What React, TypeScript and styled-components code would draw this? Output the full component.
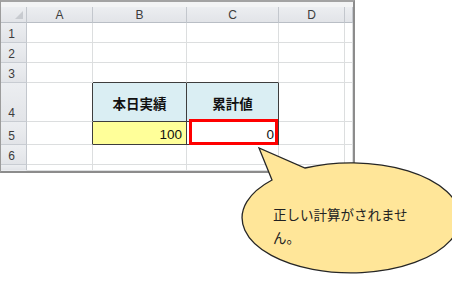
import React from "react";
import styled, { createGlobalStyle, css } from "styled-components";

const Global = createGlobalStyle`
  html, body { margin: 0; padding: 0; background: #ffffff; }
  body { width: 452px; height: 283px; overflow: hidden; position: relative;
    font-family: "Liberation Sans", "Noto Sans CJK JP", sans-serif; }
`;

const Page = styled.div`
  position: relative;
  width: 452px;
  height: 283px;
`;

const Frame = styled.div`
  width: 352px;
  border-top: 2px solid #a3a3a3;
  border-left: 1px solid #9c9c9c;
  border-right: 2px solid #8c8c8c;
  border-bottom: 2px solid #8c8c8c;
  background: #ffffff;
`;

const TopStrip = styled.div`
  height: 5px;
  background: #f3f4f5;
`;

const Sheet = styled.div`
  display: grid;
  grid-template-columns: 26px 66px 94px 92px 66px 8px;
  grid-template-rows: 16px 20px 20px 20px 39px 23px 20px 6px;
`;

const headerBase = css`
  box-sizing: border-box;
  background: linear-gradient(#eceef1, #e2e4e8);
  border-right: 1px solid #c3c7cd;
  border-bottom: 1px solid #b9bec5;
  color: #3c3c3c;
  font-size: 12px;
  display: flex;
`;

const Corner = styled.div`
  ${headerBase};
  position: relative;
`;

const CornerMark = styled.div`
  position: absolute;
  right: 3px;
  bottom: 3px;
  width: 0;
  height: 0;
  border-left: 8px solid transparent;
  border-bottom: 8px solid #c8cbd0;
`;

const ColHeader = styled.div`
  ${headerBase};
  align-items: center;
  justify-content: center;
`;

const RowHeader = styled.div<{ $last?: boolean }>`
  ${headerBase};
  border-bottom-color: ${(p) => (p.$last ? "transparent" : "#c8ccd2")};
  align-items: flex-end;
  justify-content: center;
  padding-right: 4px;
  padding-bottom: 1px;
  line-height: 14px;
`;

const Cell = styled.div<{
  $bg?: string;
  $rb?: boolean;
  $bb?: boolean;
  $head?: boolean;
  $num?: boolean;
}>`
  box-sizing: border-box;
  position: relative;
  background: ${(p) => p.$bg || "#ffffff"};
  border-right: 1px solid ${(p) => (p.$rb ? "#3d3d3d" : "#dcdedf")};
  border-bottom: 1px solid ${(p) => (p.$bb ? "#3d3d3d" : "#dcdedf")};
  display: flex;
  align-items: center;
  color: #111;
  ${(p) =>
    p.$head &&
    css`
      justify-content: center;
      font-family: "Noto Sans CJK JP", sans-serif;
      font-weight: 700;
      font-size: 13.5px;
      padding-top: 1px;
    `}
  ${(p) =>
    p.$num &&
    css`
      justify-content: flex-end;
      font-size: 13.5px;
      padding-right: 3px;
      padding-top: 2px;
    `}
`;

const Highlight = styled.div`
  position: absolute;
  left: 2px;
  right: 0;
  top: -3px;
  bottom: -1px;
  border: 3px solid #ff0000;
  box-sizing: border-box;
  pointer-events: none;
`;

const NumText = styled.span`
  position: relative;
  z-index: 1;
  padding-right: 1px;
`;

const Callout = styled.div`
  position: absolute;
  left: 0;
  top: 0;
  width: 452px;
  height: 283px;
  pointer-events: none;
`;

const CalloutText = styled.div`
  position: absolute;
  left: 273px;
  top: 203px;
  width: 138px;
  font-family: "Noto Sans CJK JP", sans-serif;
  font-size: 13.5px;
  line-height: 23px;
  color: #222222;
`;

const cols = ["A", "B", "C", "D", ""];

type CellDef = {
  text?: string;
  bg?: string;
  rb?: boolean;
  bb?: boolean;
  head?: boolean;
  num?: boolean;
  hl?: boolean;
};

const rows: { label: string; cells: CellDef[] }[] = [
  { label: "1", cells: [{}, {}, {}, {}, {}] },
  { label: "2", cells: [{}, {}, {}, {}, {}] },
  { label: "3", cells: [{}, { bb: true }, { bb: true }, {}, {}] },
  {
    label: "4",
    cells: [
      { rb: true },
      { text: "本日実績", bg: "#daeef3", rb: true, bb: true, head: true },
      { text: "累計値", bg: "#daeef3", rb: true, bb: true, head: true },
      {},
      {},
    ],
  },
  {
    label: "5",
    cells: [
      { rb: true },
      { text: "100", bg: "#ffff99", rb: true, bb: true, num: true },
      { text: "0", rb: true, bb: true, num: true, hl: true },
      {},
      {},
    ],
  },
  { label: "6", cells: [{}, {}, {}, {}, {}] },
  { label: "", cells: [{}, {}, {}, {}, {}] },
];

export default function App() {
  return (
    <Page>
      <Global />
      <Frame>
        <TopStrip />
        <Sheet>
          <Corner>
            <CornerMark />
          </Corner>
          {cols.map((c, i) => (
            <ColHeader key={i}>{c}</ColHeader>
          ))}
          {rows.map((r, ri) => (
            <React.Fragment key={ri}>
              <RowHeader $last={ri === rows.length - 1}>{r.label}</RowHeader>
              {r.cells.map((c, ci) => (
                <Cell
                  key={ci}
                  $bg={c.bg}
                  $rb={c.rb}
                  $bb={c.bb}
                  $head={c.head}
                  $num={c.num}
                >
                  {c.hl && <Highlight />}
                  {c.num ? <NumText>{c.text}</NumText> : c.text}
                </Cell>
              ))}
            </React.Fragment>
          ))}
        </Sheet>
      </Frame>
      <Callout>
        <svg width="452" height="283" viewBox="0 0 452 283">
          <path
            d="M 272 180 L 259 148 L 305 168 A 109 55 0 1 1 272 180 Z"
            fill="#ffe699"
            stroke="#262626"
            strokeWidth="1.3"
            strokeLinejoin="miter"
          />
        </svg>
        <CalloutText>正しい計算がされません。</CalloutText>
      </Callout>
    </Page>
  );
}
